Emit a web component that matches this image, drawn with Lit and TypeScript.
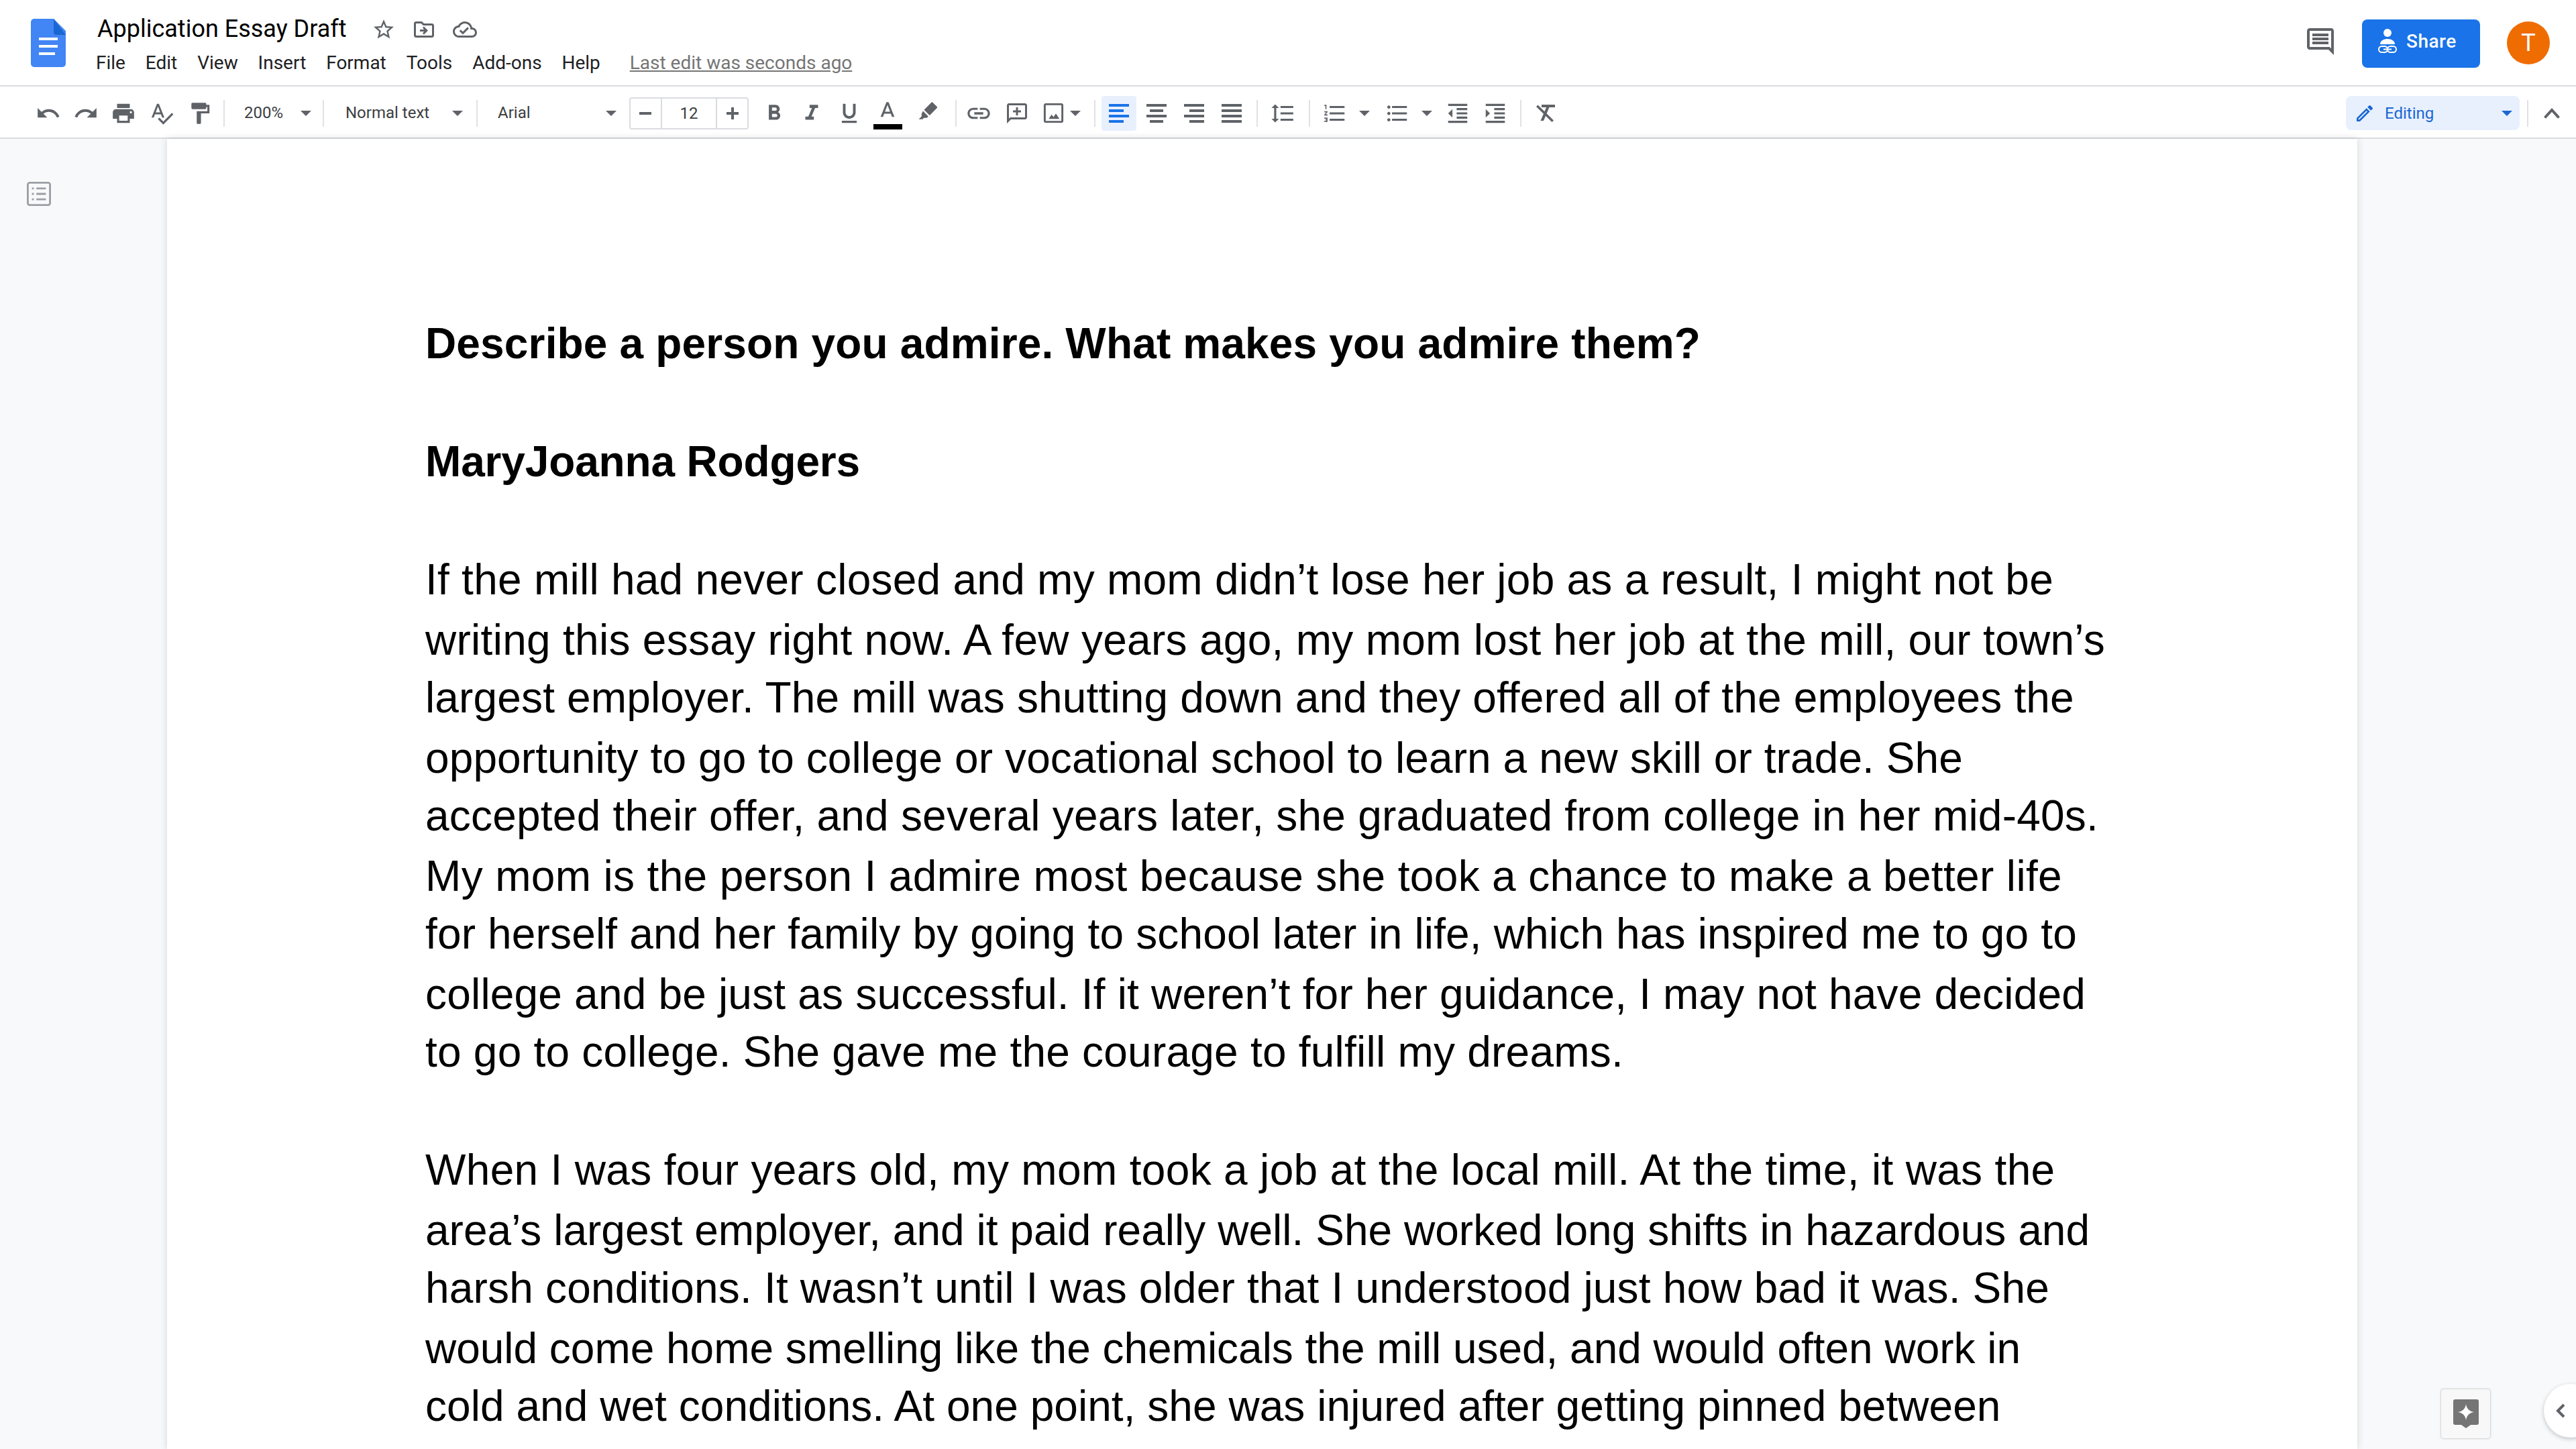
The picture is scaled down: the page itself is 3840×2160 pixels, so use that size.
import { LitElement, html, css, svg } from 'lit';
import { customElement } from 'lit/decorators.js';

// material paths, viewBox 24
const P = {
  undo: 'M12.5 8c-2.65 0-5.05.99-6.9 2.6L2 7v9h9l-3.62-3.62c1.39-1.16 3.16-1.88 5.12-1.88 3.54 0 6.55 2.31 7.6 5.5l2.37-.78C21.08 11.03 17.15 8 12.5 8z',
  redo: 'M18.4 10.6C16.55 8.99 14.15 8 11.5 8c-4.65 0-8.58 3.03-9.96 7.22L3.9 16c1.05-3.19 4.05-5.5 7.6-5.5 1.95 0 3.73.72 5.12 1.88L13 16h9V7l-3.6 3.6z',
  print: 'M19 8H5c-1.66 0-3 1.34-3 3v6h4v4h12v-4h4v-6c0-1.66-1.34-3-3-3zm-3 11H8v-5h8v5zm3-7c-.55 0-1-.45-1-1s.45-1 1-1 1 .45 1 1-.45 1-1 1zm-1-9H6v4h12V3z',
  spell: 'M12.45 16h2.09L9.43 3H7.57L2.46 16h2.09l1.12-3h5.64l1.14 3zm-6.02-5L8.5 5.48 10.57 11H6.43zm15.16.59l-8.09 8.09L9.83 16l-1.41 1.41 5.09 5.09L23 13l-1.41-1.41z',
  paint: 'M18 4V3c0-.55-.45-1-1-1H5c-.55 0-1 .45-1 1v4c0 .55.45 1 1 1h12c.55 0 1-.45 1-1V6h1v4H9v11c0 .55.45 1 1 1h2c.55 0 1-.45 1-1v-9h8V4h-3z',
  bold: 'M15.6 10.79c.97-.67 1.65-1.77 1.65-2.79 0-2.26-1.75-4-4-4H7v14h7.04c2.09 0 3.71-1.7 3.71-3.79 0-1.52-.86-2.82-2.15-3.42zM10 6.5h3c.83 0 1.5.67 1.5 1.5s-.67 1.5-1.5 1.5h-3v-3zm3.5 9H10v-3h3.5c.83 0 1.5.67 1.5 1.5s-.67 1.5-1.5 1.5z',
  italic: 'M10 4v3h2.21l-3.42 8H6v3h8v-3h-2.21l3.42-8H18V4z',
  underline: 'M12 17c3.31 0 6-2.69 6-6V3h-2.5v8c0 1.93-1.57 3.5-3.5 3.5S8.5 12.93 8.5 11V3H6v8c0 3.31 2.69 6 6 6zm-7 2v2h14v-2H5z',
  color: 'M11 2L5.5 16h2.25l1.12-3h6.25l1.12 3h2.25L13 2h-2zm-1.38 9L12 4.67 14.38 11H9.62z',
  marker: 'M17.2 3.3l4.5 4.5c.4.4.4 1 0 1.4L14 17l-5.9-5.9 7.7-7.8c.4-.4 1-.4 1.4 0zM7 12.4l5.6 5.6-1.6 1.6H8L6.5 21H2.5l3-3v-2.9z',
  link: 'M3.9 12c0-1.71 1.39-3.1 3.1-3.1h4V7H7c-2.76 0-5 2.24-5 5s2.24 5 5 5h4v-1.9H7c-1.71 0-3.1-1.39-3.1-3.1zM8 13h8v-2H8v2zm9-6h-4v1.9h4c1.71 0 3.1 1.39 3.1 3.1s-1.39 3.1-3.1 3.1h-4V17h4c2.76 0 5-2.24 5-5s-2.24-5-5-5z',
  addComment: 'M2.01 4C2.01 2.9 2.9 2 4 2h16c1.1 0 2 .9 2 2v12c0 1.1-.9 2-2 2H6l-4 4 .01-18zM4 4v13.17L5.17 16H20V4H4zm7 2h2v3h3v2h-3v3h-2v-3H8V9h3z',
  image: 'M4 2h16c1.1 0 2 .9 2 2v16c0 1.1-.9 2-2 2H4c-1.100 0-2-.9-2-2V4c0-1.100.9-2 2-2zm0 2v16h16V4H4zm3 14l3-4.500 2 2.600 2.400-3.600 3.600 5.500H7z',
  spacing: 'M6 7h2.5L5 3.5 1.5 7H4v10H1.5L5 20.5 8.5 17H6V7zm4-2v2h12V5H10zm0 14h12v-2H10v2zm0-6h12v-2H10v2z',
  numbered: 'M2 17h2v.5H3v1h1v.5H2v1h3v-4H2v1zm1-9h1V4H2v1h1v3zm-1 3h1.8L2 13.1v.9h3v-1H3.2L5 10.9V10H2v1zm5-6v2h14V5H7zm0 14h14v-2H7v2zm0-6h14v-2H7v2z',
  bullets: 'M4 10.5c-.83 0-1.5.67-1.5 1.5s.67 1.5 1.5 1.5 1.5-.67 1.5-1.5-.67-1.5-1.5-1.5zm0-6c-.83 0-1.5.67-1.5 1.5S3.17 7.5 4 7.5 5.5 6.83 5.5 6 4.83 4.5 4 4.5zm0 12c-.83 0-1.5.68-1.5 1.5s.68 1.5 1.5 1.5 1.5-.68 1.5-1.5-.67-1.5-1.5-1.5zM7 19h14v-2H7v2zm0-6h14v-2H7v2zm0-8v2h14V5H7z',
  outdent: 'M11 17h10v-2H11v2zm-8-5l4 4V8l-4 4zm0 9h18v-2H3v2zM3 3v2h18V3H3zm8 6h10V7H11v2zm0 4h10v-2H11v2z',
  indent: 'M3 21h18v-2H3v2zM3 8v8l4-4-4-4zm8 9h10v-2H11v2zM3 3v2h18V3H3zm8 6h10V7H11v2zm0 4h10v-2H11v2z',
  star: 'M22 9.24l-7.19-.62L12 2 9.19 8.63 2 9.24l5.46 4.73L5.82 21 12 17.27 18.18 21l-1.63-7.03L22 9.24zM12 15.4l-3.76 2.27 1-4.28-3.32-2.88 4.38-.38L12 6.1l1.71 4.04 4.38.38-3.32 2.88 1 4.28L12 15.4z',
  move: 'M20 6h-8l-2-2H4c-1.1 0-2 .9-2 2v12c0 1.1.9 2 2 2h16c1.1 0 2-.9 2-2V8c0-1.1-.9-2-2-2zm0 12H4V6h5.17l2 2H20v10zm-8-1l4-4-4-4-1.4 1.4 1.6 1.6H8v2h4.2l-1.6 1.6z',
  cloud: 'M19.35 10.04C18.67 6.59 15.64 4 12 4 9.11 4 6.6 5.64 5.35 8.04 2.34 8.36 0 10.91 0 14c0 3.31 2.69 6 6 6h13c2.76 0 5-2.24 5-5 0-2.64-2.05-4.78-4.65-4.96zM19 18H6c-2.21 0-4-1.79-4-4s1.79-4 4-4h.71C7.37 7.69 9.48 6 12 6c3.04 0 5.5 2.46 5.5 5.5v.5H19c1.66 0 3 1.34 3 3s-1.34 3-3 3zm-9-3.82l-2.09-2.09L6.5 13.5 10 17l6.01-6.01-1.41-1.41z',
  comment: 'M21.99 4c0-1.1-.89-2-1.99-2H4c-1.1 0-2 .9-2 2v12c0 1.1.9 2 2 2h14l4 4-.01-18zM20 4v13.17L18.83 16H4V4h16zM6 12h12v2H6zm0-3h12v2H6zm0-3h12v2H6z',
  pencil: 'M14.06 9.02l.92.92L5.92 19H5v-.92l9.06-9.06M17.66 3c-.25 0-.51.1-.7.29l-1.83 1.83 3.75 3.75 1.83-1.83c.39-.39.39-1.02 0-1.41l-2.34-2.34c-.2-.2-.45-.29-.71-.29zm-3.6 3.19L3 17.25V21h3.75L17.81 9.94l-3.75-3.75z',
};

const icon = (d: string, size = 38, cls = '') => html`<svg class=${cls} width=${size} height=${size} viewBox="0 0 24 24" fill="currentColor">${svg`<path d=${d}></path>`}</svg>`;

// four bars, x/width per bar, for the align buttons
const bars = (rows: number[][]) => html`<svg width="30" height="28" viewBox="0 0 30 28" fill="currentColor">${rows.map((r, i) => svg`<rect x=${r[0]} y=${i * 8} width=${r[1]} height="4"></rect>`)}</svg>`;

const clearFormat = html`<svg width="28" height="26" viewBox="0 0 28 26" fill="currentColor">
  <path d="M8 0h20v4H8z"></path>
  <path d="M15.500 3h4.400L11 24H6.500z"></path>
  <path d="M2.500 .5L26 23.500 23.500 26 0 3z"></path>
</svg>`;

type Tool = { w: number; kind?: 'sep' | 'arrow' | 'gap' | 'active'; body?: unknown };
const t = (w: number, body: unknown, kind?: Tool['kind']): Tool => ({ w, body, kind });
const g = (w: number): Tool => ({ w, kind: 'gap' });
const sep: Tool = { w: 2, kind: 'sep' };
const arrow = (w = 20): Tool => ({ w, kind: 'arrow' });

const leftTools: Tool[] = [
  t(56, icon(P.undo)), t(56, icon(P.redo)), t(56, icon(P.print)), t(58, icon(P.spell)), t(56, icon(P.paint)),
  g(7), sep, g(6),
];

const midTools: Tool[] = [
  g(10), t(56, icon(P.bold)), t(56, icon(P.italic)), t(56, icon(P.underline)),
  t(58, html`<span class="color">${icon(P.color)}<i></i></span>`),
  t(62, icon(P.marker, 34, 'marker')),
  g(10), sep, g(8),
  t(52, icon(P.link, 40)), t(62, icon(P.addComment, 36)), t(46, icon(P.image, 35)), arrow(20), g(18), sep, g(10),
  t(52, bars([[0, 30], [0, 22], [0, 30], [0, 22]]), 'active'),
  t(60, bars([[0, 30], [5, 20], [0, 30], [5, 20]])),
  t(52, bars([[0, 30], [8, 22], [0, 30], [8, 22]])),
  t(60, bars([[0, 30], [0, 30], [0, 30], [0, 30]])),
  g(7), sep, t(76, icon(P.spacing)), g(1), sep, g(4),
  t(68, icon(P.numbered)), arrow(20), g(6), t(66, icon(P.bullets)), g(1), arrow(20),
  t(72, icon(P.outdent)), t(40, icon(P.indent)), g(17), sep, t(74, clearFormat),
];

const menus = ['File', 'Edit', 'View', 'Insert', 'Format', 'Tools', 'Add-ons', 'Help'];

// x where the text starts on the page, and each line with the x where it ends
const TEXT_LEFT = 634;
type Line = [string, number];

const first: Line[] = [
  ['If the mill had never closed and my mom didn’t lose her job as a result, I might not be', 3058],
  ['writing this essay right now. A few years ago, my mom lost her job at the mill, our town’s', 3142],
  ['largest employer. The mill was shutting down and they offered all of the employees the', 3090],
  ['opportunity to go to college or vocational school to learn a new skill or trade. She', 2923],
  ['accepted their offer, and several years later, she graduated from college in her mid-40s.', 3125],
  ['My mom is the person I admire most because she took a chance to make a better life', 3071],
  ['for herself and her family by going to school later in life, which has inspired me to go to', 3093],
  ['college and be just as successful. If it weren’t for her guidance, I may not have decided', 3106],
  ['to go to college. She gave me the courage to fulfill my dreams.', 2417],
];

const second: Line[] = [
  ['When I was four years old, my mom took a job at the local mill. At the time, it was the', 3064],
  ['area’s largest employer, and it paid really well. She worked long shifts in hazardous and', 3112],
  ['harsh conditions. It wasn’t until I was older that I understood just how bad it was. She', 3052],
  ['would come home smelling like the chemicals the mill used, and would often work in', 3009],
  ['cold and wet conditions. At one point, she was injured after getting pinned between', 2983],
];

const ctx = document.createElement('canvas').getContext('2d')!;

// letter spacing that makes a line end where the reference line ends
const fit = ([text, end]: Line, weight = 'normal') => {
  ctx.font = `${weight} 64px "Liberation Sans"`;
  const natural = ctx.measureText(text).width;
  return `letter-spacing:${((end + 3 - TEXT_LEFT - natural) / text.length).toFixed(3)}px`;
};

@customElement('app-root')
export class AppRoot extends LitElement {
  static styles = css`
    :host {
      display: flex;
      flex-direction: column;
      position: relative;
      width: 3840px;
      height: 2160px;
      overflow: hidden;
      background: #fff;
      font-family: Roboto, sans-serif;
      color: #202124;
    }
    svg { display: block; flex: none; }

    /* title bar */
    .header {
      display: flex;
      height: 129px;
      flex: none;
      box-sizing: border-box;
      padding-left: 46px;
      border-bottom: 2px solid #dadce0;
    }
    .logo { margin-top: 28px; margin-right: 47px; }
    .heading { padding-top: 20px; }
    .title-row { display: flex; align-items: center; height: 46px; }
    .title { font-size: 36px; line-height: 46px; color: #000; }
    .title-row svg { color: #5f6368; margin-top: 2px; }
    .star { margin-left: 37px; }
    .move { margin-left: 24px; }
    .cloud { margin-left: 25px; }
    .menu { display: flex; gap: 29.9px; margin: 10px 0 0 -2px; font-size: 28px; line-height: 36px; }
    .last-edit { margin-left: 14px; color: #757575; font-size: 28px; text-decoration: underline; }
    .actions { display: flex; align-items: flex-start; margin-left: auto; padding: 29px 39px 0 0; }
    .comments { color: #5f6368; margin: 9px 38px 0 0; }
    .share {
      display: flex;
      align-items: center;
      box-sizing: border-box;
      width: 176px;
      height: 72px;
      padding: 0 0 8px 24px;
      gap: 14px;
      border-radius: 8px;
      background: #1a73e8;
      color: #fff;
      font-size: 28px;
      font-weight: 500;
      letter-spacing: .5px;
    }
    .avatar {
      width: 64px;
      height: 64px;
      margin: 3px 0 0 40px;
      border-radius: 50%;
      background: #ef6c00;
      color: #fff;
      font-size: 36px;
      line-height: 64px;
      text-align: center;
    }

    /* toolbar */
    .toolbar {
      display: flex;
      align-items: center;
      flex: none;
      height: 78px;
      box-sizing: border-box;
      padding: 3px 0 0 44px;
      border-bottom: 2px solid #dadce0;
      color: #5f6368;
    }
    .tool { display: flex; align-items: center; justify-content: center; flex: none; height: 52px; }
    .tool.active { background: #e8f0fe; color: #1a73e8; border-radius: 4px; }
    .sep { flex: none; height: 40px; margin-right: -1px; background: #e0e2e5; }
    .tri { width: 0; height: 0; border: 8px solid transparent; border-top: 8px solid currentColor; border-bottom: 0; }
    .drop { display: flex; align-items: center; box-sizing: border-box; flex: none; height: 52px; font-size: 24px; color: #3c4043; }
    .drop span { margin-bottom: 2px; }
    .drop .tri { color: #5f6368; margin-left: auto; }
    .zoom { width: 135px; padding: 0 11px 0 24px; }
    .style { width: 216px; padding: 0 14px 0 27px; }
    .font { width: 216px; padding: 0 14px 0 25px; }
    .size {
      display: flex;
      flex: none;
      box-sizing: border-box;
      width: 178px;
      height: 48px;
      margin-left: 5px;
      border: 2px solid #dadce0;
      border-radius: 4px;
      font-size: 24px;
      color: #3c4043;
    }
    .size > div { display: flex; align-items: center; justify-content: center; }
    .size .value { width: 82px; border-left: 2px solid #dadce0; border-right: 2px solid #dadce0; }
    .size .step { width: 46px; color: #5f6368; }
    .color { position: relative; display: block; width: 43px; height: 50px; }
    .color svg { margin: 5px 0 0 2px; }
    .color i { position: absolute; left: 0; bottom: 1px; width: 43px; height: 8px; background: #000; }
    .marker { margin-top: -8px; }
    .mode {
      display: flex;
      align-items: center;
      box-sizing: border-box;
      width: 259px;
      height: 51px;
      margin-left: auto;
      padding: 0 11px 0 12px;
      gap: 14px;
      border-radius: 8px;
      background: #e8f0fe;
      color: #1967d2;
      font-size: 24px;
    }
    .mode .tri { margin-left: auto; }
    .end-sep { margin-left: 11px; }
    .collapse { display: flex; justify-content: center; width: 72px; }

    /* document area */
    .workspace { display: flex; flex: 1; min-height: 0; background: #f8f9fa; }
    .gutter { flex: none; width: 249px; box-sizing: border-box; padding: 64px 0 0 40px; color: #9aa0a6; }
    .page {
      flex: none;
      width: 3265px;
      box-sizing: border-box;
      padding: 261px 0 0 385px;
      background: #fff;
      box-shadow: 0 0 10px rgba(60, 64, 67, .2);
      font-family: 'Liberation Sans', Arial, sans-serif;
      font-size: 64px;
      line-height: 88px;
      color: #000;
      white-space: nowrap;
    }
    .line { height: 88px; }
    /* the reference steps its lines 90px, then 86px */
    .line.tall { height: 90px; }
    .line.short { height: 86px; }
    .strong { font-weight: 700; }
    .blank { height: 88px; }
    .blank.short { height: 86px; }

    /* overlays, bottom right */
    .explore {
      position: absolute;
      left: 3639px;
      top: 2071px;
      display: flex;
      align-items: center;
      justify-content: center;
      width: 73px;
      height: 73px;
      box-sizing: border-box;
      border-radius: 4px;
      background: #f8f8f8;
      box-shadow: 0 0 3px rgba(60, 64, 67, .45);
    }
    .side-tab {
      position: absolute;
      left: 3792px;
      top: 2063px;
      display: flex;
      align-items: center;
      width: 80px;
      height: 80px;
      box-sizing: border-box;
      padding-left: 18px;
      border-radius: 40px;
      background: #fff;
      box-shadow: 0 2px 6px rgba(60, 64, 67, .3);
      color: #5f6368;
    }
  `;

  private renderTool(item: Tool) {
    const width = `width:${item.w}px`;
    if (item.kind === 'gap') return html`<div style=${width} class="tool"></div>`;
    if (item.kind === 'sep') return html`<div style=${width} class="sep"></div>`;
    if (item.kind === 'arrow') return html`<div style=${width} class="tool"><div class="tri"></div></div>`;
    return html`<div style=${width} class="tool ${item.kind === 'active' ? 'active' : ''}">${item.body}</div>`;
  }

  private renderLines(lines: Line[]) {
    return lines.map((l, i) => html`<div class="line ${i % 2 ? 'short' : 'tall'}" style=${fit(l)}>${l[0]}</div>`);
  }

  render() {
    const topic: Line = ['Describe a person you admire. What makes you admire them?', 2532];
    const author: Line = ['MaryJoanna Rodgers', 1279];
    return html`
      <div class="header">
        <svg class="logo" width="52" height="72" viewBox="0 0 52 72">
          <path d="M5 0h29l18 18v49a5 5 0 0 1-5 5H5a5 5 0 0 1-5-5V5a5 5 0 0 1 5-5z" fill="#4285f4"></path>
          <path d="M34 0l18 24H38a4 4 0 0 1-4-4z" fill="#1967d2"></path>
          <path d="M12 28h28v4H12zm0 11h28v4H12zm0 11h24v4H12z" fill="#fff"></path>
        </svg>
        <div class="heading">
          <div class="title-row">
            <span class="title">Application Essay Draft</span>
            ${icon(P.star, 36, 'star')}${icon(P.move, 36, 'move')}${icon(P.cloud, 36, 'cloud')}
          </div>
          <div class="menu">
            ${menus.map((m) => html`<span>${m}</span>`)}
            <span class="last-edit">Last edit was seconds ago</span>
          </div>
        </div>
        <div class="actions">
          ${icon(P.comment, 48, 'comments')}
          <div class="share">
            <svg width="28" height="36" viewBox="0 0 28 36">
              <circle cx="14" cy="6" r="6" fill="#fff"></circle>
              <path d="M3 23c0-5 5-8 11-8s11 3 11 8z" fill="#fff"></path>
              <g fill="none" stroke="#fff" stroke-width="2">
                <rect x="1" y="26" width="13" height="9" rx="4.5"></rect>
                <rect x="14" y="26" width="13" height="9" rx="4.5"></rect>
                <path d="M8 30.500h12"></path>
              </g>
            </svg>
            <span>Share</span>
          </div>
          <div class="avatar">T</div>
        </div>
      </div>

      <div class="toolbar">
        ${leftTools.map((i) => this.renderTool(i))}
        <div class="drop zoom"><span>200%</span><div class="tri"></div></div>
        ${this.renderTool(g(6))}${this.renderTool(sep)}${this.renderTool(g(6))}
        <div class="drop style"><span>Normal text</span><div class="tri"></div></div>
        ${this.renderTool(g(6))}${this.renderTool(sep)}${this.renderTool(g(6))}
        <div class="drop font"><span>Arial</span><div class="tri"></div></div>
        <div class="size">
          <div class="step"><svg width="18" height="4" viewBox="0 0 18 4" fill="currentColor"><rect width="18" height="4"></rect></svg></div>
          <div class="value">12</div>
          <div class="step"><svg width="18" height="18" viewBox="0 0 18 18" fill="currentColor"><path d="M7 0h4v7h7v4h-7v7H7v-7H0V7h7z"></path></svg></div>
        </div>
        ${midTools.map((i) => this.renderTool(i))}
        <div class="mode">
          ${icon(P.pencil, 32)}
          <span>Editing</span>
          <div class="tri"></div>
        </div>
        <div class="sep end-sep" style="width:2px"></div>
        <div class="collapse">
          <svg width="24" height="16" viewBox="0 0 24 16" fill="none" stroke="currentColor" stroke-width="4"><path d="M1.500 14.500L12 3l10.500 11.500"></path></svg>
        </div>
      </div>

      <div class="workspace">
        <div class="gutter">
          <svg width="36" height="36" viewBox="0 0 38 38" fill="none" stroke="currentColor" stroke-width="3">
            <rect x="1.500" y="1.500" width="35" height="35" rx="3"></rect>
            <path d="M8 10.500h3m4 0h15M8 19h3m4 0h15M8 27.500h3m4 0h15"></path>
          </svg>
        </div>
        <div class="page">
          <div class="line strong" style=${fit(topic, 'bold')}>${topic[0]}</div>
          <div class="blank"></div>
          <div class="line strong" style=${fit(author, 'bold')}>${author[0]}</div>
          <div class="blank"></div>
          ${this.renderLines(first)}
          <div class="blank short"></div>
          ${this.renderLines(second)}
        </div>
      </div>

      <div class="explore">
        <svg width="38" height="43" viewBox="0 0 38 43">
          <path d="M3 0h32a3 3 0 0 1 3 3v32a3 3 0 0 1-3 3h-9l-7 5-7-5H3a3 3 0 0 1-3-3V3a3 3 0 0 1 3-3z" fill="#757575"></path>
          <path d="M19 7c1 7 5 11 12 12-7 1-11 5-12 12-1-7-5-11-12-12 7-1 11-5 12-12z" fill="#fff"></path>
        </svg>
      </div>
      <div class="side-tab">
        <svg width="14" height="22" viewBox="0 0 14 22" fill="none" stroke="currentColor" stroke-width="4"><path d="M12 2L3 11l9 9"></path></svg>
      </div>
    `;
  }
}
